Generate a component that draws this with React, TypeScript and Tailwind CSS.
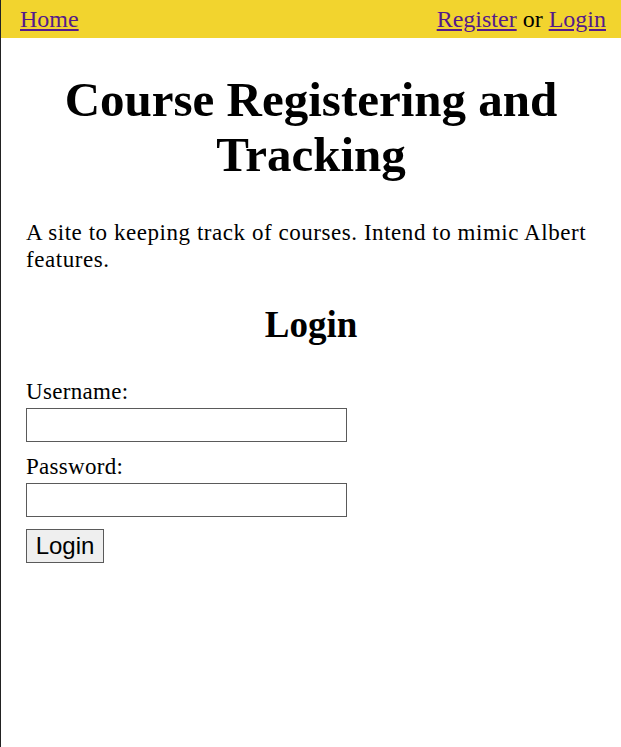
import React from "react";

const serif = { fontFamily: '"Liberation Serif", "Times New Roman", serif' };

const App = () => {
  return (
    <div
      className="min-h-[747px] border-l border-[#222] bg-white text-black"
      style={serif}
    >
      {/* Top bar */}
      <nav className="flex h-[38px] items-center justify-between bg-[#f2d42e] pl-[19px] pr-[15px] text-[24px] leading-[28px]">
        <a href="#" className="text-[#551a8b] underline">
          Home
        </a>
        <div>
          <a href="#" className="text-[#551a8b] underline">
            Register
          </a>{" "}
          or{" "}
          <a href="#" className="text-[#551a8b] underline">
            Login
          </a>
        </div>
      </nav>

      <main className="px-[25px]">
        <h1 className="mt-[34px] text-center text-[49px] font-bold leading-[55px]">
          Course Registering and Tracking
        </h1>
        <p className="mt-[37px] text-[23px] leading-[27px] tracking-[0.55px]">
          A site to keeping track of courses. Intend to mimic Albert features.
        </p>

        <h2 className="mt-[30px] text-center text-[37px] font-bold leading-[44px]">
          Login
        </h2>

        {/* Login form */}
        <form className="mt-[32px] flex flex-col items-start">
          <label className="text-[23px] leading-[26px] tracking-[0.3px]">Username:</label>
          <input
            type="text"
            className="mt-[3px] h-[34px] w-[321px] border border-[#5a5a5a] px-1"
          />
          <label className="mt-[12px] text-[23px] leading-[26px] tracking-[0.3px]">Password:</label>
          <input
            type="password"
            className="mt-[3px] h-[34px] w-[321px] border border-[#5a5a5a] px-1"
          />
          <button
            type="button"
            className="mt-[12px] h-[34px] w-[78px] border border-[#5a5a5a] bg-[#efefef] text-[24px] leading-none"
            style={{ fontFamily: '"Liberation Sans", Arial, sans-serif' }}
          >
            Login
          </button>
        </form>
      </main>
    </div>
  );
};

export default App;
